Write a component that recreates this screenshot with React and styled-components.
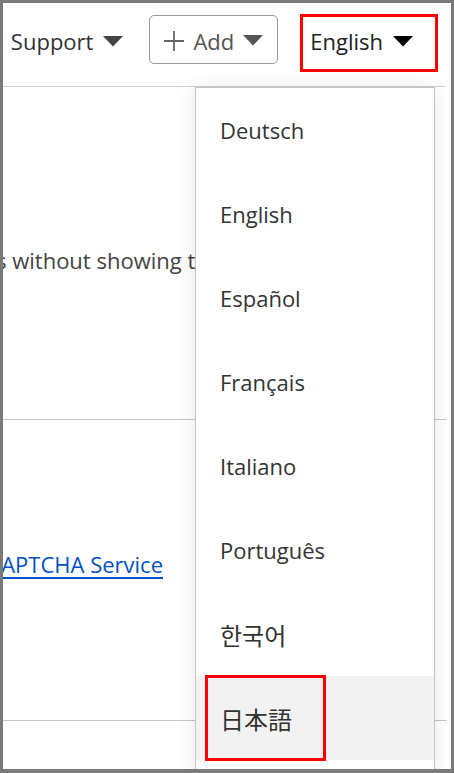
import React from "react";
import styled, { createGlobalStyle } from "styled-components";

const GlobalStyle = createGlobalStyle`
  html, body {
    margin: 0;
    padding: 0;
    background: #fff;
  }
  body {
    font-family: "Open Sans", "Noto Sans CJK JP", "Noto Sans CJK KR", sans-serif;
    color: #333;
  }
`;

const Frame = styled.div`
  width: 454px;
  height: 773px;
  box-sizing: border-box;
  border: 3px solid #7a7a7a;
  border-bottom-width: 4px;
  background: #fff;
  overflow: hidden;
`;

const Page = styled.div`
  position: relative;
  height: 100%;
  margin-right: 5px;
  overflow: hidden;
`;

const Header = styled.header`
  display: flex;
  justify-content: flex-end;
  align-items: flex-start;
  height: 84px;
  box-sizing: border-box;
  padding: 11px 8px 0 0;
  border-bottom: 1px solid #cfcfcf;
`;

const NavItem = styled.button`
  display: flex;
  align-items: center;
  gap: ${(p) => p.$gap || 10}px;
  height: ${(p) => p.$height || 58}px;
  box-sizing: border-box;
  margin: ${(p) => p.$margin || "0"};
  padding: ${(p) => p.$padding || "0 0 4px 0"};
  background: transparent;
  border: ${(p) => p.$border || "none"};
  border-radius: ${(p) => p.$radius || 0}px;
  font-family: inherit;
  font-size: 22px;
  line-height: 30px;
  color: ${(p) => p.$color || "#333"};
  cursor: pointer;
`;

const Caret = ({ color }) => (
  <svg width="20" height="11" viewBox="0 0 20 11">
    <polygon points="0,0 20,0 10,10.5" fill={color} />
  </svg>
);

const Plus = () => (
  <svg width="20" height="20" viewBox="0 0 20 20">
    <path d="M10 0 V20 M0 10 H20" stroke="#666" strokeWidth="1.8" />
  </svg>
);

const Row = styled.section`
  height: ${(p) => p.$height}px;
  box-sizing: border-box;
  padding-top: ${(p) => p.$top}px;
  border-bottom: 1px solid #c4c4c4;
  white-space: nowrap;
  overflow: hidden;
`;

const Line = styled.p`
  margin: 0 0 0 ${(p) => p.$shift || 0}px;
  font-size: 22px;
  line-height: 30px;
  color: #444;
`;

const Link = styled.a`
  color: #0051c3;
  text-decoration: underline;
  text-decoration-thickness: 2px;
  text-underline-offset: 4px;
`;

const Menu = styled.ul`
  position: absolute;
  top: 84px;
  left: 192px;
  width: 240px;
  box-sizing: border-box;
  margin: 0;
  padding: 0 0 20px;
  list-style: none;
  background: #fff;
  border: 1px solid #c4c4c4;
  box-shadow: 0 0 18px rgba(0, 0, 0, 0.09);
`;

const MenuItem = styled.li`
  display: flex;
  align-items: center;
  height: 84px;
  padding-left: 24px;
  font-size: ${(p) => (p.$cjk ? 24 : 22)}px;
  color: #333;
  background: ${(p) => (p.$hover ? "#f2f2f2" : "#fff")};
`;

const Marked = styled.span`
  display: flex;
  align-items: center;
  height: 86px;
  box-sizing: border-box;
  margin-left: -15px;
  padding: 0 31px 0 12px;
  border: 3px solid #ff0000;
`;

const languages = ["Deutsch", "English", "Español", "Français", "Italiano", "Português"];

export default function App() {
  return (
    <>
      <GlobalStyle />
      <Frame>
        <Page>
          <Header>
            <NavItem $margin="0 26px 0 0">
              Support <Caret color="#444" />
            </NavItem>
            <NavItem
              $height={49}
              $margin="1px 22px 0 0"
              $padding="2px 14px 0 14px"
              $border="1px solid #9a9a9a"
              $radius={5}
              $gap={9}
              $color="#555"
            >
              <Plus /> Add <Caret color="#555" />
            </NavItem>
            <NavItem $border="3px solid #ff0000" $padding="0 22px 4px 7px" $color="#222">
              English <Caret color="#000" />
            </NavItem>
          </Header>
          <Row $height={333} $top={158}>
            <Line $shift={-7}>s without showing the user a puzzle</Line>
          </Row>
          <Row $height={301} $top={129}>
            <Line $shift={-37}>
              <Link href="#">reCAPTCHA Service</Link>
            </Line>
          </Row>
          <Row $height={60} $top={0} />
          <Menu>
            {languages.map((l) => (
              <MenuItem key={l}>{l}</MenuItem>
            ))}
            <MenuItem $cjk>한국어</MenuItem>
            <MenuItem $hover $cjk>
              <Marked>日本語</Marked>
            </MenuItem>
          </Menu>
        </Page>
      </Frame>
    </>
  );
}
